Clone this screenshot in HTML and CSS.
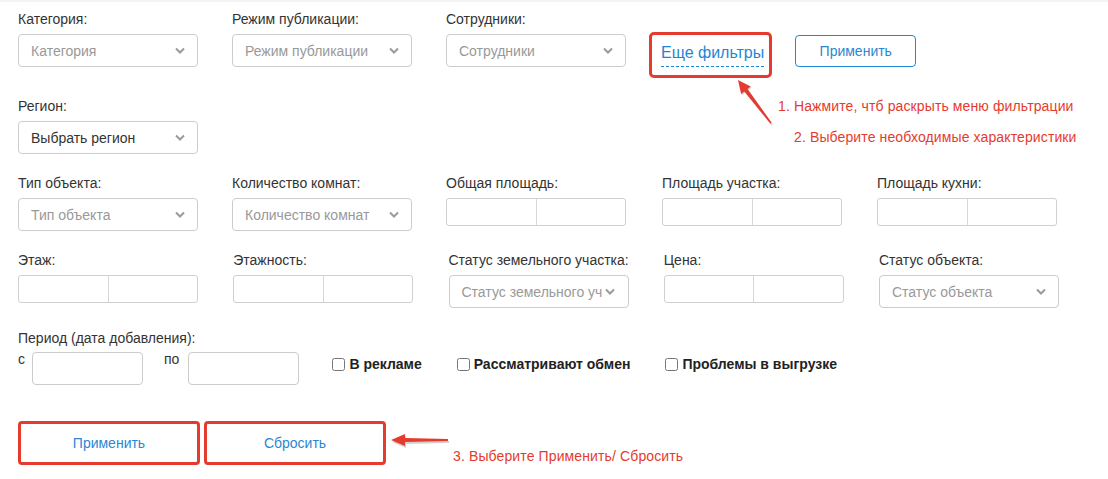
FILE: index.html
```html
<!DOCTYPE html>
<html lang="ru">
<head>
<meta charset="utf-8">
<title>Фильтры</title>
<link rel="stylesheet" href="styles.css">
</head>
<body>
<div class="page">
  <div class="row row-top">
    <div class="field">
      <div class="label">Категория:</div>
      <div class="select placeholder"><span class="select-text">Категория</span><svg class="chev" viewBox="0 0 10 7"><path d="M1 1.5 L5 5.5 L9 1.5"/></svg></div>
    </div>
    <div class="field">
      <div class="label">Режим публикации:</div>
      <div class="select placeholder"><span class="select-text">Режим публикации</span><svg class="chev" viewBox="0 0 10 7"><path d="M1 1.5 L5 5.5 L9 1.5"/></svg></div>
    </div>
    <div class="field">
      <div class="label">Сотрудники:</div>
      <div class="select placeholder"><span class="select-text">Сотрудники</span><svg class="chev" viewBox="0 0 10 7"><path d="M1 1.5 L5 5.5 L9 1.5"/></svg></div>
    </div>
    <a class="more-filters">Еще фильтры</a>
    <button class="btn-outline">Применить</button>
  </div>

  <div class="row row-region">
    <div class="field">
      <div class="label">Регион:</div>
      <div class="select"><span class="select-text">Выбрать регион</span><svg class="chev" viewBox="0 0 10 7"><path d="M1 1.5 L5 5.5 L9 1.5"/></svg></div>
    </div>
  </div>

  <div class="row row-3">
    <div class="field">
      <div class="label">Тип объекта:</div>
      <div class="select placeholder"><span class="select-text">Тип объекта</span><svg class="chev" viewBox="0 0 10 7"><path d="M1 1.5 L5 5.5 L9 1.5"/></svg></div>
    </div>
    <div class="field">
      <div class="label">Количество комнат:</div>
      <div class="select placeholder"><span class="select-text">Количество комнат</span><svg class="chev" viewBox="0 0 10 7"><path d="M1 1.5 L5 5.5 L9 1.5"/></svg></div>
    </div>
    <div class="field">
      <div class="label">Общая площадь:</div>
      <div class="range"><div class="range-part"></div><div class="range-part"></div></div>
    </div>
    <div class="field field-plot">
      <div class="label">Площадь участка:</div>
      <div class="range"><div class="range-part"></div><div class="range-part"></div></div>
    </div>
    <div class="field field-kitchen">
      <div class="label">Площадь кухни:</div>
      <div class="range"><div class="range-part"></div><div class="range-part"></div></div>
    </div>
  </div>

  <div class="row row-4">
    <div class="field">
      <div class="label">Этаж:</div>
      <div class="range"><div class="range-part"></div><div class="range-part"></div></div>
    </div>
    <div class="field">
      <div class="label">Этажность:</div>
      <div class="range"><div class="range-part"></div><div class="range-part"></div></div>
    </div>
    <div class="field">
      <div class="label">Статус земельного участка:</div>
      <div class="select placeholder tight"><span class="select-text">Статус земельного уч</span><svg class="chev" viewBox="0 0 10 7"><path d="M1 1.5 L5 5.5 L9 1.5"/></svg></div>
    </div>
    <div class="field">
      <div class="label">Цена:</div>
      <div class="range"><div class="range-part"></div><div class="range-part"></div></div>
    </div>
    <div class="field">
      <div class="label">Статус объекта:</div>
      <div class="select placeholder"><span class="select-text">Статус объекта</span><svg class="chev" viewBox="0 0 10 7"><path d="M1 1.5 L5 5.5 L9 1.5"/></svg></div>
    </div>
  </div>

  <div class="period">
    <div class="label">Период (дата добавления):</div>
    <div class="period-row">
      <span class="period-word">с</span>
      <div class="date-input"></div>
      <span class="period-word period-to">по</span>
      <div class="date-input"></div>
      <div class="checks">
        <label class="check"><input type="checkbox">В рекламе</label>
        <label class="check"><input type="checkbox">Рассматривают обмен</label>
        <label class="check"><input type="checkbox">Проблемы в выгрузке</label>
      </div>
    </div>
  </div>

  <div class="actions">
    <button class="btn-action">Применить</button>
    <button class="btn-action">Сбросить</button>
  </div>

  <div class="note note-1">1. Нажмите, чтб раскрыть меню фильтрации</div>
  <div class="note note-2">2. Выберите необходимые характеристики</div>
  <div class="note note-3">3. Выберите Применить/ Сбросить</div>

  <svg class="arrows" viewBox="0 0 1108 479" width="1108" height="479">
    <g class="arrow-shadow">
      <polygon points="739,82 751.7,87.6 748.5,90.1 772.6,124.5 771.4,125.5 745.3,92.5 742.1,95"/>
      <polygon points="392,442 406,436 406,440 449,441 449,443 406,444 406,448"/>
    </g>
    <g class="arrow">
      <polygon points="738,80 750.7,86.6 747.5,89.1 771.6,122.5 770.4,123.5 744.3,91.5 741.1,94"/>
      <polygon points="391,440 405,434 405,438 448,439 448,441 405,442 405,446"/>
    </g>
  </svg>
</div>
</body>
</html>
```

FILE: styles.css
```css
* {
  box-sizing: border-box;
}

html, body {
  margin: 0;
  padding: 0;
  background: #ffffff;
}

body {
  font-family: "Liberation Sans", Arial, sans-serif;
  font-size: 14px;
  color: #333333;
  border-top: 2px solid #f4f4f4;
}

.page {
  position: relative;
  width: 1108px;
  height: 477px;
  padding: 7px 0 0 18px;
}

.row {
  display: flex;
  align-items: flex-start;
}

.row-top {
  gap: 34px;
}

.row-region {
  margin-top: 29px;
}

.row-3 {
  margin-top: 19px;
  gap: 34px;
}

.row-3 .field-plot {
  margin-left: 2px;
}

.row-3 .field-kitchen {
  margin-left: 1px;
}

.row-4 {
  margin-top: 19px;
  gap: 35.25px;
}

.field {
  width: 180px;
  flex: none;
}

.label {
  line-height: 20px;
  margin-bottom: 5px;
  white-space: nowrap;
  color: #333333;
}

.select {
  display: flex;
  align-items: center;
  height: 33px;
  border: 1px solid #cccccc;
  border-radius: 4px;
  padding: 0 12px 0 12px;
  background: #ffffff;
  color: #333333;
}

.select.placeholder {
  color: #999999;
}

.select-text {
  flex: 1 1 auto;
  white-space: nowrap;
}

.chev {
  flex: none;
  width: 10px;
  height: 7px;
  margin-left: 6px;
  fill: none;
  stroke: #9a9a9a;
  stroke-width: 2;
}

.select.tight {
  padding-right: 13px;
}

.select.tight .chev {
  margin-left: 2px;
}

.range {
  display: flex;
  height: 28px;
  border: 1px solid #d0d0d0;
  border-radius: 3px;
  background: #ffffff;
}

.range-part {
  flex: 1 1 0;
}

.range-part + .range-part {
  border-left: 1px solid #d8d8d8;
}

.more-filters {
  flex: none;
  position: relative;
  margin-left: 1px;
  margin-top: 34.5px;
  font-size: 16px;
  line-height: 18px;
  padding-bottom: 4px;
  color: #1e86d6;
  border-bottom: 1px dashed #1e86d6;
  white-space: nowrap;
  cursor: pointer;
}

.more-filters::after {
  content: "";
  position: absolute;
  left: -12px;
  right: -8px;
  top: -11.5px;
  bottom: -12.5px;
  border: 3px solid #e53b2f;
  border-radius: 5px;
}

.btn-outline {
  flex: none;
  margin-left: -3px;
  margin-top: 26px;
  width: 121px;
  height: 32px;
  border: 1px solid #1f87d6;
  border-radius: 4px;
  background: #ffffff;
  color: #2b87d1;
  font-family: "Liberation Sans", Arial, sans-serif;
  font-size: 14px;
  padding: 0;
}

.period {
  margin-top: 20px;
}

.period .label {
  margin-bottom: 4px;
}

.period-row {
  display: flex;
  align-items: flex-start;
}

.period-word {
  line-height: 14px;
  margin-right: 7px;
  color: #333333;
}

.period-to {
  margin-left: 21px;
  margin-right: 9px;
}

.date-input {
  width: 111px;
  height: 33px;
  border: 1px solid #cccccc;
  border-radius: 4px;
  background: #ffffff;
}

.checks {
  display: flex;
  gap: 35px;
  margin-left: 33px;
  margin-top: 2px;
}

.check {
  display: flex;
  align-items: center;
  line-height: 20px;
  font-weight: bold;
  color: #222222;
  white-space: nowrap;
}

.check input {
  width: 13px;
  height: 13px;
  margin: 0 4px 0 0;
}

.actions {
  display: flex;
  gap: 4px;
  margin-top: 36px;
}

.btn-action {
  width: 182px;
  height: 44px;
  border: 3px solid #e53b2f;
  border-radius: 4px;
  background: #ffffff;
  color: #2b87d1;
  font-family: "Liberation Sans", Arial, sans-serif;
  font-size: 14px;
  padding: 0;
}

.note {
  position: absolute;
  font-size: 14px;
  line-height: 16px;
  color: #e53b2f;
  white-space: nowrap;
  letter-spacing: 0.12px;
}

.note-1 {
  left: 778px;
  top: 96px;
}

.note-2 {
  left: 794px;
  top: 127px;
}

.note-3 {
  left: 453px;
  top: 446px;
}

.arrows {
  position: absolute;
  left: 0;
  top: -2px;
  pointer-events: none;
}

.arrow {
  fill: #e53b2f;
}

.arrow-shadow {
  fill: rgba(0, 0, 0, 0.18);
}
```
